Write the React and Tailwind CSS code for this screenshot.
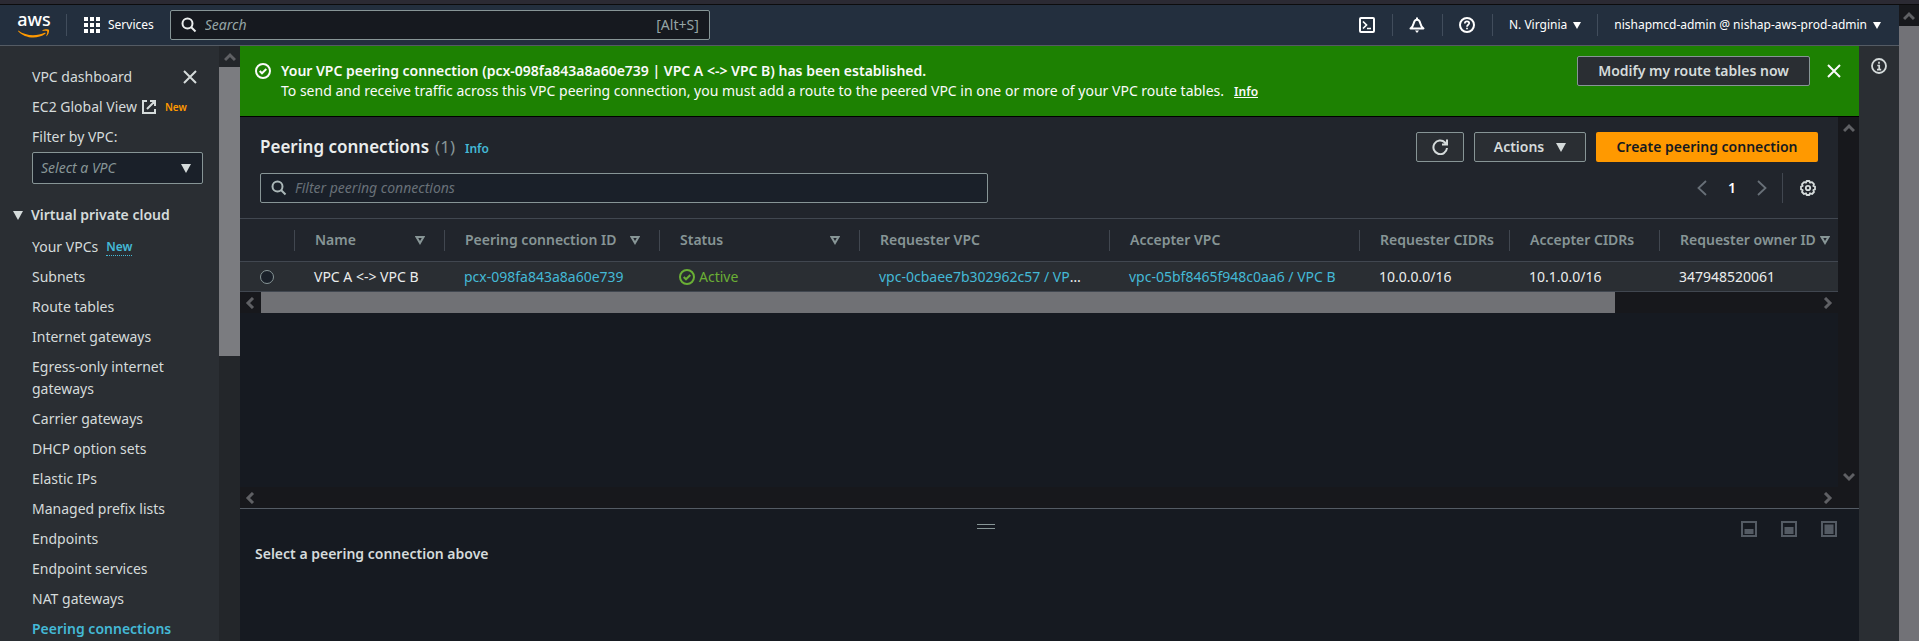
import React from "react";

const navItems = [
  "Subnets",
  "Route tables",
  "Internet gateways",
  "Egress-only internet gateways",
  "Carrier gateways",
  "DHCP option sets",
  "Elastic IPs",
  "Managed prefix lists",
  "Endpoints",
  "Endpoint services",
  "NAT gateways",
];

const columns = [
  { label: "Name", sort: true, width: "w-[150px]" },
  { label: "Peering connection ID", sort: true, width: "w-[215px]" },
  { label: "Status", sort: true, width: "w-[200px]" },
  { label: "Requester VPC", width: "w-[250px]" },
  { label: "Accepter VPC", width: "w-[250px]" },
  { label: "Requester CIDRs", width: "w-[150px]" },
  { label: "Accepter CIDRs", width: "w-[150px]" },
  { label: "Requester owner ID", sort: true, last: true, width: "w-auto" },
];

function Caret({ className = "" }) {
  return (
    <svg viewBox="0 0 10 8" aria-hidden="true" preserveAspectRatio="none" className={`shrink-0 fill-current ${className}`}>
      <path d="M0 0h10L5 8z" />
    </svg>
  );
}

function Chevron({ d, className = "" }) {
  return (
    <svg viewBox="0 0 12 12" aria-hidden="true" className={`size-3 fill-none stroke-current ${className}`}>
      <path d={d} strokeWidth="3" />
    </svg>
  );
}

const UP = "M1 9l5-5 5 5";
const DOWN = "M1 3l5 5 5-5";
const LEFT = "M8 1L3 6l5 5";
const RIGHT = "M3 1l5 5-5 5";

function ScrollArrow({ d, label, className = "" }) {
  return (
    <button type="button" aria-label={label} className={`flex size-[21px] shrink-0 items-center justify-center text-[#5f6064] ${className}`}>
      <Chevron d={d} />
    </button>
  );
}

function SearchIcon({ className = "" }) {
  return (
    <svg viewBox="0 0 16 16" aria-hidden="true" className={`size-4 shrink-0 fill-none stroke-current ${className}`}>
      <circle cx="6.500" cy="6.500" r="5" strokeWidth="2" />
      <path d="M10 10l4.500 4.500" strokeWidth="2" />
    </svg>
  );
}

function CloseIcon() {
  return (
    <svg viewBox="0 0 16 16" aria-hidden="true" className="size-4 fill-none stroke-current">
      <path d="M2 2l12 12M14 2L2 14" strokeWidth="2" />
    </svg>
  );
}

function CheckCircle() {
  return (
    <svg viewBox="0 0 16 16" aria-hidden="true" className="size-4 shrink-0 fill-none stroke-current">
      <circle cx="8" cy="8" r="7" strokeWidth="2" />
      <path d="M4.700 8l2.300 2.300 4.300-4.300" strokeWidth="2" />
    </svg>
  );
}

function AwsLogo() {
  return (
    <a href="#home" aria-label="AWS home" className="flex w-8 flex-col items-center text-white">
      <span className="text-lg leading-3 font-medium">aws</span>
      <svg viewBox="0 0 32 9" aria-hidden="true" className="mt-1 h-[9px] w-8">
        <path d="M0.300 1.500c4.500 3.300 9.600 4.700 14.700 4.700 4.300 0 8.300-1 11.700-2.500 0.700-0.300 1.200 0.500 0.600 1C24 7.200 19.500 8.500 15.300 8.500 9.400 8.500 4 6.200 0.100 2.200z" fill="#f90" />
        <path d="M24.500 1.300c2-1.400 5.500-1.300 6.300-0.600 0.700 0.800 0 4.600-2 6.400-0.400 0.300-0.700 0.100-0.500-0.300 0.500-1.300 1.300-3.900 0.800-4.500-0.600-0.700-3-0.500-4.300-0.400-0.500 0-0.600-0.300-0.300-0.600z" fill="#f90" />
      </svg>
    </a>
  );
}

function TopBar() {
  return (
    <header className="flex h-[41px] shrink-0 items-center border-b border-[#545b64] bg-[#232f3e] text-xs text-white">
      <div className="flex h-[22px] items-center border-r border-[#414d5c] pr-4 pl-[18px]">
        <AwsLogo />
      </div>
      <button type="button" className="flex items-center gap-2 pr-4 pl-[17px]">
        <svg viewBox="0 0 16 16" aria-hidden="true" className="size-4 fill-current">
          <path d="M0 0h4v4H0zM6 0h4v4H6zM12 0h4v4h-4zM0 6h4v4H0zM6 6h4v4H6zM12 6h4v4h-4zM0 12h4v4H0zM6 12h4v4H6zM12 12h4v4h-4z" />
        </svg>
        Services
      </button>
      <label className="flex h-[30px] w-[540px] items-center gap-2 rounded-xs border border-[#879596] bg-[#16191f] px-2.5 text-sm">
        <SearchIcon className="text-[#eaeded]" />
        <input type="search" aria-label="Search" placeholder="Search" className="min-w-0 flex-1 bg-transparent italic outline-none placeholder:text-[#95a5a6]" />
        <span className="text-[#95a5a6]">[Alt+S]</span>
      </label>
      <div className="ml-auto flex items-center">
        <button type="button" aria-label="CloudShell" className="flex h-[22px] w-[50px] items-center justify-center border-r border-[#414d5c]">
          <svg viewBox="0 0 16 16" aria-hidden="true" className="size-4 fill-none stroke-current">
            <rect x="1" y="1" width="14" height="14" rx="1" strokeWidth="2" />
            <path d="M4 4.500L7.500 8 4 11.500M8 11.500h4" strokeWidth="1.700" />
          </svg>
        </button>
        <button type="button" aria-label="Notifications" className="flex h-[22px] w-[50px] items-center justify-center border-r border-[#414d5c]">
          <svg viewBox="0 0 16 16" aria-hidden="true" className="size-4 fill-none stroke-current">
            <path d="M8 0.500v2M1.500 11.500c2.500-2 2.800-3.500 3.300-5.500C5.300 4 6.300 2.800 8 2.800S10.700 4 11.200 6c0.500 2 0.800 3.500 3.300 5.500z" strokeWidth="2" strokeLinejoin="round" />
            <path d="M6 13.500h4L8 16z" fill="currentColor" stroke="none" />
          </svg>
        </button>
        <button type="button" aria-label="Help" className="flex h-[22px] w-[50px] items-center justify-center border-r border-[#414d5c]">
          <svg viewBox="0 0 16 16" aria-hidden="true" className="size-4 fill-none stroke-current">
            <circle cx="8" cy="8" r="7" strokeWidth="2" />
            <path d="M5.800 6.500C5.800 5 6.700 4.300 8 4.300s2.200 0.800 2.200 2C10.200 7.800 8 7.800 8 9.700M8 10.700v1.600" strokeWidth="1.700" />
          </svg>
        </button>
        <button type="button" className="flex h-[22px] items-center justify-center gap-1.5 border-r border-[#414d5c] px-4">
          N. Virginia
          <Caret className="h-[7px] w-2" />
        </button>
        <button type="button" className="flex items-center gap-1.5 pr-[18px] pl-4">
          nishapmcd-admin @ nishap-aws-prod-admin
          <Caret className="h-[7px] w-2" />
        </button>
      </div>
    </header>
  );
}

function Sidebar() {
  return (
    <aside className="flex w-60 shrink-0 overflow-hidden bg-[#2a2e33] text-[#d5dbdb]">
      <nav aria-label="VPC" className="flex-1 pt-5 pr-4 pl-8">
        <div className="flex items-center justify-between pr-[5px]">
          <a href="#dashboard">VPC dashboard</a>
          <button type="button" aria-label="Close navigation">
            <CloseIcon />
          </button>
        </div>
        <div className="mt-2 flex items-center">
          <a href="#global" className="flex items-center gap-1">
            EC2 Global View
            <svg viewBox="0 0 16 16" aria-hidden="true" className="size-4 fill-none stroke-current">
              <path d="M6 2H2v12h12v-4M9 2h5v5M14 2L6 10" strokeWidth="2" />
            </svg>
          </a>
          <span className="ml-2 text-[10px] font-semibold text-[#f90]">New</span>
        </div>
        <label htmlFor="vpc" className="mt-2 block">
          Filter by VPC:
        </label>
        <div className="relative mt-1 flex items-center">
          <select id="vpc" className="h-8 w-full appearance-none rounded-xs border border-[#879596] bg-[#1a2029] px-2 text-[#879596] italic">
            <option>Select a VPC</option>
          </select>
          <Caret className="pointer-events-none absolute right-3 h-[9px] w-2.5" />
        </div>
        <button type="button" aria-expanded="true" className="mt-5 -ml-5 flex items-center gap-2 pl-px font-semibold">
          <Caret className="h-[9px] w-2.5" />
          Virtual private cloud
        </button>
        <ul className="mt-2.5 flex flex-col gap-2">
          <li className="flex items-center gap-2">
            <a href="#vpcs">Your VPCs</a>
            <a href="#new" className="border-b border-dotted border-[#44b9d6] text-xs leading-4 font-semibold text-[#44b9d6]">
              New
            </a>
          </li>
          {navItems.map((item) => (
            <li key={item}>
              <a href="#nav">{item}</a>
            </li>
          ))}
          <li>
            <a href="#peering" aria-current="page" className="font-semibold text-[#44b9d6]">
              Peering connections
            </a>
          </li>
        </ul>
      </nav>
      <div className="flex w-[21px] shrink-0 flex-col bg-[#23262a]">
        <ScrollArrow d={UP} label="Scroll navigation up" />
        <div className="h-[289px] bg-[#7b7c80]" />
      </div>
    </aside>
  );
}

function Banner() {
  return (
    <div role="status" className="flex h-[71px] shrink-0 items-start gap-2.5 border-b border-black bg-[#1d8102] pt-2.5 pr-[17px] pl-[15px] text-[#fafafa]">
      <span className="mt-[7px]">
        <CheckCircle />
      </span>
      <div className="flex-1 pt-[5px] leading-5">
        <p className="font-semibold">Your VPC peering connection (pcx-098fa843a8a60e739 | VPC A &lt;-&gt; VPC B) has been established.</p>
        <p>
          To send and receive traffic across this VPC peering connection, you must add a route to the peered VPC in one or more of your VPC route tables.
          <a href="#info" className="ml-2.5 text-xs font-semibold underline">
            Info
          </a>
        </p>
      </div>
      <button type="button" className="h-[30px] w-[233px] rounded-xs border border-[#879596] bg-[#2a2e33] font-semibold text-[#d5dbdb]">
        Modify my route tables now
      </button>
      <button type="button" aria-label="Dismiss" className="mt-[7px] ml-1.5">
        <CloseIcon />
      </button>
    </div>
  );
}

function Toolbar() {
  return (
    <div className="bg-[#21252c] px-5 pt-[15px] pb-[15px]">
      <div className="flex h-[30px] items-center gap-2.5">
        <h1 className="flex flex-1 items-baseline text-[17px] font-semibold text-[#eaeded]">
          Peering connections
          <span className="ml-1.5 font-normal text-[#879596]">(1)</span>
          <a href="#info" className="ml-2.5 text-xs text-[#44b9d6]">
            Info
          </a>
        </h1>
        <button type="button" aria-label="Refresh" className="flex h-[30px] w-12 items-center justify-center rounded-xs border border-[#879596] bg-[#2a2e33] text-[#d5dbdb]">
          <svg viewBox="0 0 16 16" aria-hidden="true" className="size-4 fill-none stroke-current">
            <path d="M10 5.500h5V0.500M15 9a6.800 6.800 0 1 1-2-5.500L15 5.500" strokeWidth="2" />
          </svg>
        </button>
        <button type="button" className="flex h-[30px] w-28 items-center justify-center gap-3 rounded-xs border border-[#879596] bg-[#2a2e33] font-semibold text-[#d5dbdb]">
          Actions
          <Caret className="h-[9px] w-2.5" />
        </button>
        <button type="button" className="h-[30px] w-[222px] rounded-xs bg-[#f90] font-semibold text-[#16191f]">Create peering connection</button>
      </div>
      <div className="mt-[11px] flex h-[30px] items-center justify-between">
        <label className="flex h-[30px] w-[728px] items-center gap-2 rounded-xs border border-[#879596] bg-[#1a2029] px-2.5">
          <SearchIcon className="text-[#aab7b8]" />
          <input type="search" aria-label="Filter peering connections" placeholder="Filter peering connections" className="min-w-0 flex-1 bg-transparent italic outline-none placeholder:text-[#687078]" />
        </label>
        <div className="flex h-full items-center text-[#687078]">
          <button type="button" aria-label="Previous page">
            <svg viewBox="0 0 16 16" aria-hidden="true" className="size-4 fill-none stroke-current">
              <path d="M12 1L4.500 8l7.500 7" strokeWidth="1.800" />
            </svg>
          </button>
          <span className="w-11 text-center font-semibold text-white">1</span>
          <button type="button" aria-label="Next page">
            <svg viewBox="0 0 16 16" aria-hidden="true" className="size-4 fill-none stroke-current">
              <path d="M4 1l7.500 7L4 15" strokeWidth="1.800" />
            </svg>
          </button>
          <span className="ml-3 h-full border-l border-[#414750]" />
          <button type="button" aria-label="Preferences" className="ml-[17px] mr-0.5 text-[#d5dbdb]">
            <svg viewBox="0 0 16 16" aria-hidden="true" className="size-4 fill-none stroke-current">
              <path d="M6.600 1h2.800l0.600 1.700 2-0.600 2 2-0.700 1.900 1.700 0.600v2.800l-1.700 0.600 0.700 2-2 2-2-0.700L9.400 15H6.600L6 13.300l-2 0.700-2-2 0.700-2L1 9.400V6.600L2.700 6 2 4.100l2-2 2 0.600z" strokeWidth="1.800" strokeLinejoin="round" />
              <circle cx="8" cy="8" r="2.200" strokeWidth="1.800" />
            </svg>
          </button>
        </div>
      </div>
    </div>
  );
}

function PeeringTable() {
  return (
    <table className="w-full table-fixed border-collapse text-left whitespace-nowrap">
      <thead>
        <tr className="h-[43px] border-y border-[#414750] bg-[#21252c] text-[#879596]">
          <th aria-label="Selection" className="w-[54px] p-0" />
          {columns.map((c) => (
            <th key={c.label} className={`p-0 font-semibold ${c.width}`}>
              <div className={`flex h-[21px] items-center justify-between border-l border-[#414750] pl-5 ${c.last ? "pr-2" : "pr-[19px]"}`}>
                {c.label}
                {c.sort && (
                  <svg viewBox="0 0 10 9" aria-hidden="true" className="h-[9px] w-2.5 shrink-0 fill-none stroke-current">
                    <path d="M1.500 1h7L5 7z" strokeWidth="2" />
                  </svg>
                )}
              </div>
            </th>
          ))}
        </tr>
      </thead>
      <tbody>
        <tr className="h-[30px] border-b border-[#414750] bg-[#2a2e33] text-[#eaeded]">
          <td className="p-0 pl-5">
            <input type="radio" name="pcx" aria-label="Select VPC A <-> VPC B" className="block size-3.5 appearance-none rounded-full border border-[#879596] bg-[#1a2029]" />
          </td>
          <td className="p-0 pl-5">VPC A &lt;-&gt; VPC B</td>
          <td className="p-0 pl-5">
            <a href="#pcx" className="text-[#44b9d6]">pcx-098fa843a8a60e739</a>
          </td>
          <td className="p-0 pl-5">
            <span className="flex items-center gap-1 text-[#6aaf35]">
              <CheckCircle />
              Active
            </span>
          </td>
          <td className="truncate p-0 pr-5 pl-5">
            <a href="#vpc-a" className="text-[#44b9d6]">vpc-0cbaee7b302962c57 / VPC A</a>
          </td>
          <td className="truncate p-0 pl-5">
            <a href="#vpc-b" className="text-[#44b9d6]">vpc-05bf8465f948c0aa6 / VPC B</a>
          </td>
          <td className="p-0 pl-5">10.0.0.0/16</td>
          <td className="p-0 pl-5">10.1.0.0/16</td>
          <td className="p-0 pl-5">347948520061</td>
        </tr>
      </tbody>
    </table>
  );
}

function PanelSizeButton({ label, y }) {
  return (
    <button type="button" aria-label={label} className="text-[#545b64]">
      <svg viewBox="0 0 16 16" aria-hidden="true" className="size-4 fill-none stroke-current">
        <rect x="1" y="1" width="14" height="14" strokeWidth="2" />
        <rect x="3.500" y={y} width="9" height={13 - y} fill="currentColor" stroke="none" />
      </svg>
    </button>
  );
}

function SplitPanel() {
  return (
    <section className="h-[133px] shrink-0 border-t border-[#545b64] bg-[#161a21] pr-[22px] pl-[15px]">
      <div className="flex items-center gap-6 pt-3">
        <button type="button" aria-label="Resize panel" className="flex h-4 flex-1 items-start justify-center pt-[3px]">
          <span className="h-[5px] w-[18px] border-y border-[#879596]" />
        </button>
        <PanelSizeButton label="Small panel" y={8} />
        <PanelSizeButton label="Medium panel" y={6} />
        <PanelSizeButton label="Large panel" y={3.5} />
      </div>
      <h2 className="mt-1.5 font-semibold text-[#d5dbdb]">Select a peering connection above</h2>
    </section>
  );
}

export default function App() {
  return (
    <div className="flex h-screen overflow-hidden bg-[#161a21] font-['Noto_Sans','Open_Sans',sans-serif] text-sm leading-[22px]">
      <div className="flex min-w-0 flex-1 flex-col">
        <div className="h-[5px] shrink-0 border-b border-[#0c0c0d] bg-[#2b2a33]" />
        <TopBar />
        <div className="flex min-h-0 flex-1">
          <Sidebar />
          <main className="flex min-w-0 flex-1 flex-col">
            <Banner />
            <div className="flex min-h-0 flex-1">
              <div className="flex min-w-0 flex-1 flex-col">
                <Toolbar />
                <PeeringTable />
                <div className="flex h-[21px] shrink-0 bg-[#17181c]">
                  <ScrollArrow d={LEFT} label="Scroll table left" />
                  <div className="flex-1">
                    <div className="h-full w-[87%] bg-[#707175]" />
                  </div>
                  <ScrollArrow d={RIGHT} label="Scroll table right" />
                </div>
                <div className="mt-auto flex h-[21px] shrink-0 justify-between bg-[#17181c]">
                  <ScrollArrow d={LEFT} label="Scroll page left" />
                  <ScrollArrow d={RIGHT} label="Scroll page right" />
                </div>
              </div>
              <div className="flex w-[21px] shrink-0 flex-col justify-between bg-[#17181c] pb-[21px]">
                <ScrollArrow d={UP} label="Scroll page up" />
                <ScrollArrow d={DOWN} label="Scroll page down" />
              </div>
            </div>
            <SplitPanel />
          </main>
          <aside className="w-10 shrink-0 bg-[#2a2e33] pt-3 text-[#d5dbdb]">
            <button type="button" aria-label="Open info panel" className="mx-auto block">
              <svg viewBox="0 0 16 16" aria-hidden="true" className="size-4 fill-none stroke-current">
                <circle cx="8" cy="8" r="7" strokeWidth="1.800" />
                <path d="M8 3.700v2M6.300 7.500h1.900v4M6 11.700h4.200" strokeWidth="1.700" />
              </svg>
            </button>
          </aside>
        </div>
      </div>
      <div className="flex w-5 shrink-0 flex-col bg-[#727277]">
        <div className="h-[5px] shrink-0 border-b border-[#0c0c0d] bg-[#2b2a33]" />
        <ScrollArrow d={UP} label="Scroll up" className="w-5 bg-[#17181c]" />
      </div>
    </div>
  );
}
